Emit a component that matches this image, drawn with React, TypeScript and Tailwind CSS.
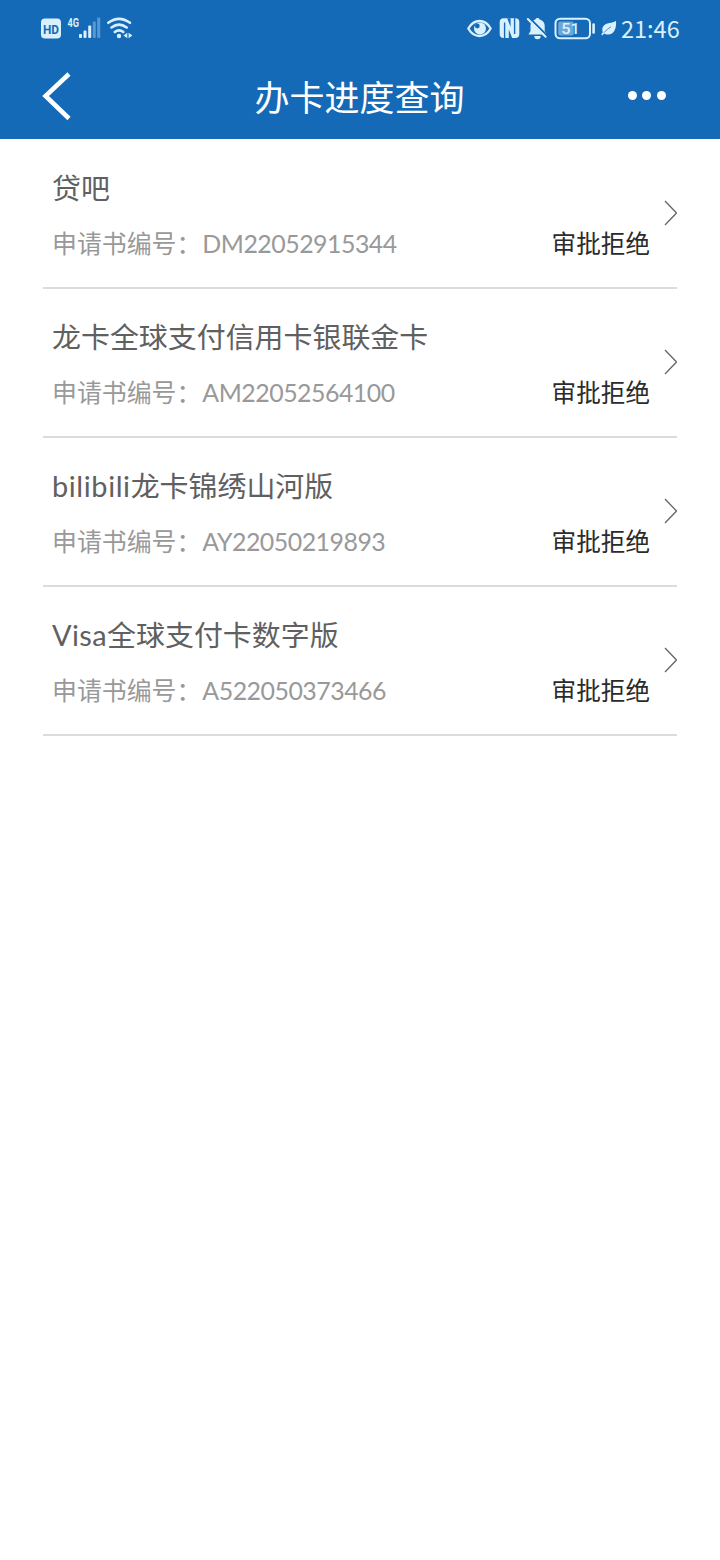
import React from 'react';

interface Application {
  name: string;
  brand?: string;
  code: string;
  status: string;
}

const applications: Application[] = [
  { name: '贷吧', code: 'DM22052915344', status: '审批拒绝' },
  { name: '龙卡全球支付信用卡银联金卡', code: 'AM22052564100', status: '审批拒绝' },
  { brand: 'bilibili', name: '龙卡锦绣山河版', code: 'AY22050219893', status: '审批拒绝' },
  { brand: 'Visa', name: '全球支付卡数字版', code: 'A522050373466', status: '审批拒绝' },
];

const SignalIcons: React.FC = () => (
  <svg width="100" height="30" viewBox="38 12 100 30" fill="#d9f1ff">
    <rect x="41" y="17.5" width="20" height="20" rx="4" />
    <text x="51" y="32.5" textAnchor="middle" fontSize="13.5" fontWeight="700" textLength="16" lengthAdjust="spacingAndGlyphs" fill="#146ab6" className="font-['Roboto',sans-serif]">HD</text>
    <text x="67.5" y="25.5" fontSize="12" fontWeight="700" textLength="11.5" lengthAdjust="spacingAndGlyphs" className="font-['Roboto',sans-serif]">4G</text>
    <rect x="79" y="33" width="3" height="4" rx="1" />
    <rect x="83.5" y="29.5" width="3" height="7.5" rx="1" />
    <rect x="88.2" y="24.5" width="3" height="12.5" rx="1" />
    <rect x="92.8" y="20.5" width="3" height="16.5" rx="1" opacity=".35" />
    <rect x="97.2" y="16.5" width="3" height="20.5" rx="1" opacity=".35" />
    <g fill="none" stroke="#d9f1ff" strokeWidth="2.6" strokeLinecap="round">
      <path d="M108.3 21.8Q119 13.8 130 21.8" />
      <path d="M111.5 26.5Q119 20.8 126.7 26.5" />
      <path d="M114.8 31Q119 27.6 123.3 31" />
    </g>
    <circle cx="119" cy="35" r="2.2" />
    <path d="M127.3 31.8v5.4l-3.8-2.7zM128.6 31.8v5.4l3.8-2.7z" />
  </svg>
);

const SystemIcons: React.FC = () => (
  <svg width="154" height="30" viewBox="465 12 154 30" fill="#d9f1ff">
    {/* eye */}
    <path d="M468.3 27.5C474 17.5 485 17.5 490.7 27.5C485 37.5 474 37.5 468.3 27.5Z" fill="none" stroke="#d9f1ff" strokeWidth="2.3" strokeLinejoin="round" />
    <circle cx="480" cy="27.5" r="6" />
    <circle cx="477.3" cy="25" r="2.4" fill="#146ab6" />
    {/* nfc */}
    <rect x="499.7" y="17.3" width="19.6" height="19.7" rx="4" />
    <path d="M504.6 37V21.5M514.6 17.3V33" fill="none" stroke="#146ab6" strokeWidth="1.4" />
    <path d="M508.8 28.5L512.2 37H508.8ZM507.2 17.3H510.6V26Z" fill="#146ab6" />
    {/* muted bell */}
    <path d="M537.5 17c1.2 0 2 .6 2.2 1.5c3.5 1 5 3.500 5 6.500v5l1.800 3.500h-18l2-3.500v-5c0-3 1.500-5.500 4.800-6.500c.2-.9 1-1.500 2.200-1.500zM534.3 35h6.400a3.200 3.200 0 0 1-6.400 0z" />
    <path d="M529.500 17l18 18" stroke="#146ab6" strokeWidth="1.800" />
    <path d="M527.800 18l17.800 17.800" stroke="#d9f1ff" strokeWidth="2" strokeLinecap="round" />
    {/* battery */}
    <rect x="555.5" y="17.7" width="34.5" height="19.6" rx="4.5" fill="none" stroke="#d9f1ff" strokeWidth="2" />
    <rect x="558.2" y="20.4" width="15.5" height="14.2" rx="2" opacity=".45" />
    <text x="570.5" y="32.6" textAnchor="middle" fontSize="15.5" fontWeight="500" textLength="18.5" lengthAdjust="spacingAndGlyphs" className="font-['Roboto',sans-serif]">51</text>
    <rect x="592.3" y="22.3" width="2.6" height="10.5" rx="1.2" />
    {/* power saving leaf */}
    <path d="M616 19.8c.6 8-2 14.2-8.700 13.700c-1.300-.1-2.300-.4-3.200-1l-2 2l-.8-1c.5-.8 1-1.600 1.500-2.200c-1.800-5 1.500-8.500 6.500-9.200c2.700-.4 4.800-.8 6.700-2.300z" />
    <path d="M604 31.700q3.300-4 7-6" fill="none" stroke="#146ab6" strokeWidth=".7" />
  </svg>
);

const StatusBar: React.FC = () => (
  <div className="flex h-[55px] items-center justify-between pl-[38px] pr-10">
    <SignalIcons />
    <div className="flex items-center gap-0.5">
      <SystemIcons />
      <span className="w-[59px] whitespace-nowrap font-['Noto_Sans_CJK_SC',sans-serif] text-[23.5px] leading-[30px] text-[#d9f1ff]">21:46</span>
    </div>
  </div>
);

const NavBar: React.FC = () => (
  <div className="flex h-[84px] items-center justify-between pl-10 pr-[54px]">
    <button aria-label="back">
      <svg width="32" height="50" viewBox="0 0 32 50" fill="none" stroke="#fff" strokeWidth="4.5">
        <path d="M29 2L5.5 24L29 46.5" />
      </svg>
    </button>
    <h1 className="pl-[19px] text-[35px] leading-[50px] text-white">办卡进度查询</h1>
    <button aria-label="more" className="flex gap-[5.5px] pb-[3px]">
      <span className="size-[9px] rounded-full bg-white" />
      <span className="size-[9px] rounded-full bg-white" />
      <span className="size-[9px] rounded-full bg-white" />
    </button>
  </div>
);

const ApplicationRow: React.FC<{ item: Application }> = ({ item }) => (
  <li className="flex h-[149px] items-start border-b-2 border-[#dcdcdc] pl-[9px] pt-7">
    <div className="flex-1">
      <h2 className="whitespace-nowrap text-[28.95px] leading-10 text-[#606060]">
        {item.brand && (
          <span className={item.brand === 'Visa' ? 'tracking-[0.4px]' : 'tracking-[0.6px]'}>{item.brand}</span>
        )}
        {item.name}
      </h2>
      <div className="mt-[17px] flex justify-between text-[24.9px] leading-9">
        <p className="flex text-[#999]">
          <span>申请书编号：</span>
          <span className="pl-px tracking-[-0.5px]">{item.code}</span>
        </p>
        <p className="pt-px text-[24.6px] text-[#2b2b2b]">{item.status}</p>
      </div>
    </div>
    <svg className="ml-3.5 mt-8 shrink-0" width="13" height="26" viewBox="0 0 13 26" fill="none" stroke="#666" strokeWidth="1.3">
      <path d="M1 1L12.5 13L1 25" />
    </svg>
  </li>
);

const App: React.FC = () => {
  return (
    <div className="min-h-[1560px] w-[720px] bg-white font-['Lato','Noto_Sans_CJK_SC',sans-serif]">
      <header className="bg-[#146ab6]">
        <StatusBar />
        <NavBar />
      </header>
      <ul className="px-[43px] pt-px">
        {applications.map((item) => (
          <ApplicationRow key={item.code} item={item} />
        ))}
      </ul>
    </div>
  );
};

export default App;
